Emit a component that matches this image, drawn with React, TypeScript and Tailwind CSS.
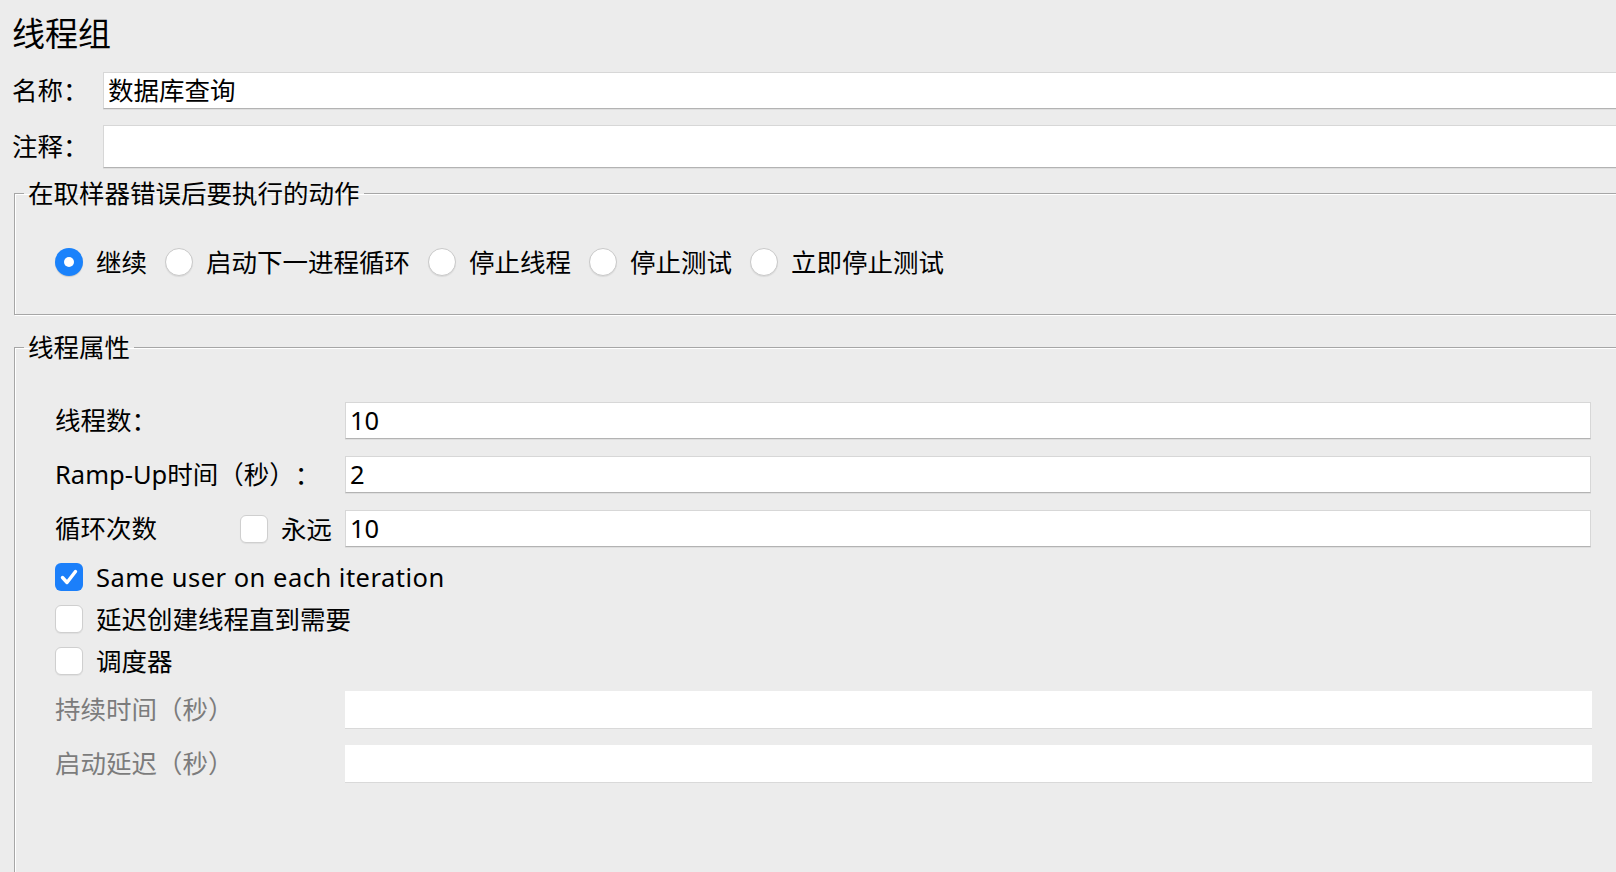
import React from 'react';

const font = "font-['Noto_Sans','Noto_Sans_CJK_SC',sans-serif]";

function Field({ value, className = '', disabled }: { value?: string; className?: string; disabled?: boolean }) {
  return (
    <div
      className={`bg-white flex items-center pl-[4px] text-[25.5px] leading-none ${
        disabled ? 'shadow-[0_1px_0_#d9d9d9]' : 'border border-[#d7d7d7] border-b-[#b3b3b3] shadow-[0_1px_0_#dedede]'
      } ${className}`}
    >
      {value}
    </div>
  );
}

function Radio({ checked, label }: { checked?: boolean; label: string }) {
  return (
    <div className="flex items-center mr-[18px]">
      {checked ? (
        <span className="w-[28px] h-[28px] rounded-full bg-[#1a82fb] flex items-center justify-center shadow-[0_1px_1px_rgba(0,0,0,0.15)]">
          <span className="w-[10px] h-[10px] rounded-full bg-white" />
        </span>
      ) : (
        <span className="w-[28px] h-[28px] rounded-full bg-white border border-[#c9c9c9] shadow-[0_1px_1px_rgba(0,0,0,0.08)]" />
      )}
      <span className="ml-[13px] text-[25.5px] leading-[28px]">{label}</span>
    </div>
  );
}

function Check({ checked, label, className = '' }: { checked?: boolean; label?: string; className?: string }) {
  return (
    <div className={`flex items-center ${className}`}>
      {checked ? (
        <span className="w-[28px] h-[28px] rounded-[6px] bg-[#1b7ffa] flex items-center justify-center">
          <svg width="28" height="28" viewBox="0 0 28 28" fill="none">
            <path d="M7.5 14.5 L12 19.5 L20.5 8.5" stroke="white" strokeWidth="3.4" strokeLinecap="round" strokeLinejoin="round" />
          </svg>
        </span>
      ) : (
        <span className="w-[28px] h-[28px] rounded-[6px] bg-white border border-[#cfcfcf] shadow-[0_1px_1px_rgba(0,0,0,0.06)]" />
      )}
      {label && <span className="ml-[13px] text-[25.5px] leading-[28px]">{label}</span>}
    </div>
  );
}

export default function App() {
  return (
    <div className={`w-[1616px] h-[872px] overflow-hidden bg-[#ececec] text-black [text-spacing-trim:space-all] ${font}`}>
      <div className="pl-[12px] pt-[17px] text-[33px] leading-[34px]">线程组</div>

      <div className="flex items-center mt-[21px] h-[37px] -mr-[20px]">
        <span className="w-[103px] pl-[12px] text-[25.5px] leading-none">名称：</span>
        <Field value="数据库查询" className="flex-1 h-[37px]" />
      </div>
      <div className="flex items-center mt-[16px] h-[43px] -mr-[20px]">
        <span className="w-[103px] pl-[12px] text-[25.5px] leading-none">注释：</span>
        <Field className="flex-1 h-[43px]" />
      </div>

      <fieldset className="mt-[8px] ml-[14px] -mr-[40px] border border-[#a6a6a6] shadow-[1px_1px_0_#fff,inset_1px_1px_0_#fff]">
        <legend className="ml-[9px] px-[4px] text-[25.5px] leading-[34px]">在取样器错误后要执行的动作</legend>
        <div className="flex items-center h-[28px] mt-[38px] mb-[38px] ml-[40px]">
          <Radio checked label="继续" />
          <Radio label="启动下一进程循环" />
          <Radio label="停止线程" />
          <Radio label="停止测试" />
          <Radio label="立即停止测试" />
        </div>
      </fieldset>

      <fieldset className="mt-[15px] ml-[14px] -mr-[40px] border border-[#a6a6a6] shadow-[inset_1px_1px_0_#fff]">
        <legend className="ml-[9px] px-[4px] text-[25.5px] leading-[34px]">线程属性</legend>

        <div className="pt-[38px] pb-[140px] pl-[40px]">
          <div className="flex items-center h-[37px]">
            <span className="w-[290px] text-[25.5px] leading-none">线程数：</span>
            <Field value="10" className="w-[1246px] h-[37px]" />
          </div>
          <div className="flex items-center h-[37px] mt-[17px]">
            <span className="w-[290px] text-[25.5px] leading-none">Ramp-Up时间（秒）：</span>
            <Field value="2" className="w-[1246px] h-[37px]" />
          </div>
          <div className="flex items-center h-[37px] mt-[17px]">
            <div className="w-[290px] flex items-center">
              <span className="w-[185px] text-[25.5px] leading-none">循环次数</span>
              <Check label="永远" />
            </div>
            <Field value="10" className="w-[1246px] h-[37px]" />
          </div>

          <Check checked label="Same user on each iteration" className="mt-[16px] h-[28px] tracking-[0.5px]" />
          <Check label="延迟创建线程直到需要" className="mt-[14px] h-[28px]" />
          <Check label="调度器" className="mt-[14px] h-[28px]" />

          <div className="flex items-center h-[37px] mt-[16px]">
            <span className="w-[290px] text-[25.5px] leading-none text-[#7c7c7c]">持续时间（秒）</span>
            <Field disabled className="w-[1247px] h-[37px]" />
          </div>
          <div className="flex items-center h-[37px] mt-[17px]">
            <span className="w-[290px] text-[25.5px] leading-none text-[#7c7c7c]">启动延迟（秒）</span>
            <Field disabled className="w-[1247px] h-[37px]" />
          </div>
        </div>
      </fieldset>
    </div>
  );
}
